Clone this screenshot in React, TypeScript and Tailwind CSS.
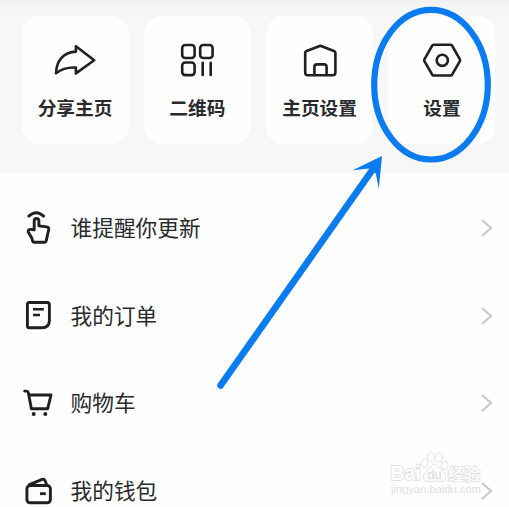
import type { ReactNode } from "react";

const INK = "#202022";
const BLUE = "#0a7cf0";

function Icon({ box, w, h, sw, children }: { box: string; w: number; h: number; sw: number; children: ReactNode }) {
  return (
    <svg viewBox={box} width={w} height={h} fill="none" stroke={INK} strokeWidth={sw} strokeLinejoin="round" strokeLinecap="round" className="shrink-0">
      {children}
    </svg>
  );
}

const actions: { label: string; icon: ReactNode }[] = [
  {
    label: "分享主页",
    icon: <path d="M75.9 46.2 94.2 60.3 75.9 73.4V67.5C67 67 61 69.3 56 73.2 56.4 61 63 52.2 75.9 51.6Z" />,
  },
  {
    label: "二维码",
    icon: (
      <g transform="translate(-122.3 0)">
        <rect x="182.5" y="45" width="12.4" height="13" rx="3" />
        <rect x="200.5" y="45" width="12.4" height="13" rx="3" />
        <rect x="182.5" y="62.5" width="12.4" height="12.6" rx="3" />
        <path d="M203 62.7v12.3M211 62.7v12.3" />
      </g>
    ),
  },
  {
    label: "主页设置",
    icon: (
      <g transform="translate(-244.6 0)">
        <path d="M320 45.7 334.2 51.3Q335 51.7 335 53V72.5Q335 75.3 332.2 75.3H307.6Q304.8 75.3 304.8 72.5V53Q304.8 51.7 305.6 51.3Z" />
        <path d="M314 75V67Q314 64.4 316.6 64.4H323.6Q326.2 64.4 326.2 67V75" />
      </g>
    ),
  },
  {
    label: "设置",
    icon: (
      <g transform="translate(-366.7 0)">
        <path d="M433.2 44.8H450.5Q451.3 44.8 451.8 45.7L459.6 59.3Q460 60.3 459.6 61.2L451.8 74.6Q451.3 75.5 450.5 75.5H433.2Q432.4 75.5 431.9 74.6L424.1 61.2Q423.7 60.3 424.1 59.3L431.9 45.7Q432.4 44.8 433.2 44.8Z" />
        <circle cx="442" cy="60.3" r="5.6" />
      </g>
    ),
  },
];

const rows: { label: string; icon: ReactNode }[] = [
  {
    label: "谁提醒你更新",
    icon: (
      <g transform="translate(0 -228.5)">
        <path d="M28.8 216.6Q36.3 209.8 43.6 216.6" />
        <path d="M34.2 230V221.6Q34.2 219 36.5 219T38.9 221.6V226.4L46.8 227.4Q48.9 227.8 48.7 230L46.2 241.4Q45.8 242.7 44.6 242.7H34.3Q33 242.7 32.6 241.5L31.8 238.4 28.8 233.6Q27.6 231.3 28.8 230.3 30 229.4 34.2 230.4Z" />
      </g>
    ),
  },
  {
    label: "我的订单",
    icon: (
      <g transform="translate(0 -316)">
        <path d="M29.3 302.5H47.2Q49.4 302.5 49.4 305V320.2Q49.4 327.8 41.8 327.8H29.3Q27.4 327.8 27.4 325.7V304.6Q27.4 302.5 29.3 302.5Z" />
        <path d="M33 309.2H43.8M33 315H40" strokeLinecap="butt" strokeWidth="2.6" />
      </g>
    ),
  },
  {
    label: "购物车",
    icon: (
      <g transform="translate(0 -403)">
        <path d="M24.7 391.1H26.5Q28 391.1 28.3 392.5L31.4 408.7H47.7L51 395H28.8" />
        <g fill={INK} stroke="none">
          <circle cx="33.7" cy="414" r="2" />
          <circle cx="45.3" cy="414" r="2" />
        </g>
      </g>
    ),
  },
  {
    label: "我的钱包",
    icon: (
      <g transform="translate(0 -490.5)">
        <rect x="26.9" y="485" width="23.5" height="17.3" rx="3.2" />
        <path d="M29.3 484.2 42.3 478.8Q44.2 478.3 45 480L46.9 484.8" />
        <path d="M40 493.2H45.8" strokeLinecap="butt" strokeWidth="2.8" />
      </g>
    ),
  },
];

function Watermark() {
  return (
    <svg width="96" height="50" viewBox="388 449 96 50" className="absolute left-[388px] top-[449px] font-['Liberation_Sans','Noto_Sans_CJK_SC',sans-serif]" fill="#fff" stroke="#e2e2e2" strokeWidth="1">
      <g>
        <ellipse cx="424.6" cy="463.5" rx="3.3" ry="4.3" transform="rotate(-12 424.6 463.5)" />
        <ellipse cx="430.8" cy="457" rx="3.4" ry="4.8" />
        <ellipse cx="438.8" cy="457.3" rx="3.4" ry="4.8" transform="rotate(10 438.8 457.3)" />
        <ellipse cx="444.5" cy="465.5" rx="3.3" ry="4.3" transform="rotate(14 444.5 465.5)" />
        <path d="M434.5 464.3C438 464.3 439 468 442 470.5 448 475 446.5 482 440.5 481.5Q434.5 480.6 429 481.5C422.5 482 421.5 475 427 470.8 430.3 468 431 464.3 434.5 464.3Z" />
      </g>
      <text x="390.5" y="480.2" fontSize="20" fontWeight="700" textLength="30" lengthAdjust="spacingAndGlyphs" strokeWidth="1.8" paintOrder="stroke">Bai</text>
      <text x="427.5" y="478.6" fontSize="12.5" textLength="14" lengthAdjust="spacingAndGlyphs" fill="#dedede" stroke="#dedede" strokeWidth="0.4">du</text>
      <text x="448" y="479.6" fontSize="16" fontWeight="500" textLength="32" lengthAdjust="spacingAndGlyphs" strokeWidth="1.8" paintOrder="stroke">经验</text>
      <text x="391" y="492.5" fontSize="11" textLength="90" lengthAdjust="spacingAndGlyphs" fill="#dedede" stroke="none">jingyan.baidu.com</text>
    </svg>
  );
}

export default function App() {
  return (
    <div className="relative h-[507px] w-[509px] overflow-hidden bg-[#fefefe] font-['Noto_Sans_CJK_SC',sans-serif] text-[#2a2a2c]">
      <header className="flex h-[173px] items-start gap-[15.3px] bg-[#f7f7f7] bg-linear-to-b from-[#f1f1f1] from-0% to-[#f7f7f7] to-6% pl-[21.5px] pt-4">
        {actions.map((a) => (
          <div key={a.label} className="flex h-32 w-[107px] shrink-0 flex-col items-center rounded-[18px] bg-[#fefefe] pt-6">
            <Icon box="52 40 46 40" w={46} h={40} sw={2.6}>{a.icon}</Icon>
            <span className="mt-[13px] whitespace-nowrap text-[18.7px] leading-7 font-bold">{a.label}</span>
          </div>
        ))}
      </header>
      <main className="flex flex-col pt-[11.5px]">
        {rows.map((r) => (
          <div key={r.label} className="flex h-[87.5px] shrink-0 items-center pl-[22px] pr-[15px]">
            <Icon box="22 -18 32 36" w={32} h={36} sw={2.9}>{r.icon}</Icon>
            <span className="mb-0.5 ml-[16.5px] flex-1 text-[21.7px] leading-8">{r.label}</span>
            <svg width="14" height="20" viewBox="0 0 14 20" fill="none" stroke="#c7c7c7" strokeWidth="2">
              <path d="M2 2 11 10 2 18" />
            </svg>
          </div>
        ))}
      </main>
      <Watermark />
      <svg width="509" height="507" viewBox="0 0 509 507" className="pointer-events-none absolute left-0 top-0">
        <ellipse cx="431" cy="84.7" rx="56.8" ry="74.8" fill="none" stroke={BLUE} strokeWidth="6.2" />
        <path d="M220.5 385.5 373 169" stroke={BLUE} strokeWidth="6.6" strokeLinecap="round" />
        <path d="M382 156 352.5 170.2 369 168.5 375.8 173.5 378.8 189Z" fill={BLUE} />
      </svg>
    </div>
  );
}
